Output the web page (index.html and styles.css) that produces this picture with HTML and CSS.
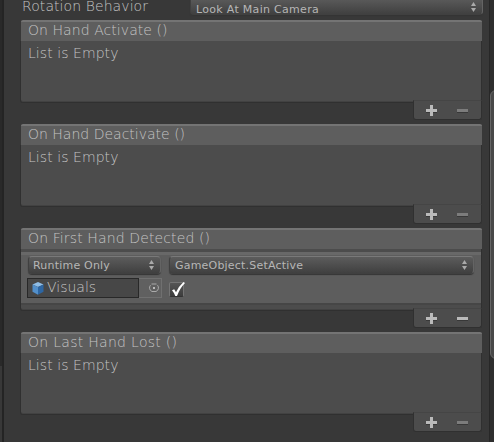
FILE: index.html
```html
<!DOCTYPE html>
<html lang="en">
<head>
<meta charset="utf-8">
<title>Inspector</title>
<link rel="stylesheet" href="styles.css">
</head>
<body>
<div class="gutter"></div>
<main class="inspector">
  <div class="property">
    <span class="label">Rotation Behavior</span>
    <div class="popup camera"><span>Look At Main Camera</span><svg class="arrows" viewBox="0 0 5 10"><path d="M2.5 0 5 4H0zM0 6h5L2.5 10z"/></svg></div>
  </div>
  <section class="event">
    <h2><span class="t-act">On Hand Activate ()</span></h2>
    <div class="list"><span class="empty">List is Empty</span></div>
    <div class="footer"><i class="plus"></i><i class="minus off"></i></div>
  </section>
  <section class="event">
    <h2><span class="t-deact">On Hand Deactivate ()</span></h2>
    <div class="list"><span class="empty">List is Empty</span></div>
    <div class="footer"><i class="plus"></i><i class="minus off"></i></div>
  </section>
  <section class="event">
    <h2><span class="t-first">On First Hand Detected ()</span></h2>
    <div class="list filled">
      <div class="entry">
        <div class="popup runtime"><span>Runtime Only</span><svg class="arrows" viewBox="0 0 5 10"><path d="M2.5 0 5 4H0zM0 6h5L2.5 10z"/></svg></div>
        <div class="popup method"><span>GameObject.SetActive</span><svg class="arrows" viewBox="0 0 5 10"><path d="M2.5 0 5 4H0zM0 6h5L2.5 10z"/></svg></div>
        <div class="object">
          <div class="field">
            <svg class="cube" viewBox="0 0 12 13"><path fill="#8fbde6" d="M6 0 11.500 2.400 6 5 .5 2.400z"/><path fill="#528fca" d="M.5 2.400 6 5v7.700L.5 9.700z"/><path fill="#2d66a3" d="M11.500 2.400 6 5v7.700l5.500-3z"/></svg>
            <span>Visuals</span>
          </div>
          <div class="picker"><svg viewBox="0 0 10 10"><path fill="none" stroke="#aaa" d="M2.500 1h5M1.500 2.200A4 4 0 0 0 3 8.500h4a4 4 0 0 0 1.500-6.300"/><path fill="#bbb" d="M4 4h2v2H4z"/></svg></div>
        </div>
        <div class="check"><svg viewBox="0 0 16 16"><path d="M3 8.200 5.200 7.200 7 10.200Q9.500 4.500 14.500 0L16 1Q11 6 8 14H6.300Q5 10.500 3 8.200z"/></svg></div>
      </div>
    </div>
    <div class="footer"><i class="plus"></i><i class="minus"></i></div>
  </section>
  <section class="event">
    <h2><span class="t-last">On Last Hand Lost ()</span></h2>
    <div class="list"><span class="empty">List is Empty</span></div>
    <div class="footer"><i class="plus"></i><i class="minus off"></i></div>
  </section>
</main>
<div class="scrollbar"><div class="thumb"></div></div>
</body>
</html>
```
FILE: styles.css
```css
* { box-sizing: border-box; }
body {
  margin: 0;
  width: 494px;
  height: 442px;
  overflow: hidden;
  display: flex;
  background: #383838;
  color: #c4c4c4;
  font: 200 14px/16px "DejaVu Sans", sans-serif;
  white-space: nowrap;
}
.gutter {
  width: 4px;
  background: linear-gradient(#292929, #292929) 0 0 / 2px 366px no-repeat #383838;
  border-right: 2px solid #242424;
}
.inspector { width: 485px; padding-left: 17px; }
.property { display: flex; height: 20px; }
.label { width: 169px; height: 14px; line-height: 13px; padding-left: 1px; letter-spacing: .08px; }
.popup {
  display: flex;
  justify-content: space-between;
  height: 18px;
  padding: 2px 6px 0 5px;
  border: 1px solid #404040;
  border-top-color: #797979;
  border-right-color: #646464;
  border-radius: 4px;
  background: linear-gradient(#5c5c5c, #404040);
  box-shadow: 0 1px 1px #353535;
  font: 11px/14px "DejaVu Sans", sans-serif;
  letter-spacing: .2px;
  color: #b6b6b6;
}
.arrows { width: 5px; height: 10px; margin-top: 1px; fill: #aaa; }
.camera { width: 293px; margin-top: -3px; padding-top: 5px; letter-spacing: .3px; }
.camera .arrows { margin-top: -1px; }
.event { width: 461px; height: 104px; }
h2 {
  height: 21px;
  margin: 0;
  padding: 0 7px;
  border-top: 2px solid #747474;
  border-radius: 2px 2px 0 0;
  background: #5e5e5e;
  font: inherit;
}
.t-act, .empty { letter-spacing: .06px; }
.t-first { letter-spacing: .12px; }
.t-last { letter-spacing: .29px; }
.list {
  height: 62px;
  padding: 4px 7px;
  background: #4c4c4c;
  border: solid #303030;
  border-width: 0 1px 1px 0;
  border-radius: 0 0 3px 3px;
  box-shadow: inset 0 -1px #424242, -1px 0 #303030;
}
.footer {
  position: relative;
  display: flex;
  width: 69px;
  height: 20px;
  margin: -3px 0 0 392px;
  border: 1px solid #303030;
  border-top-color: #454545;
  border-radius: 0 0 3px 3px;
  background: #4c4c4c;
}
.plus, .minus { height: 3px; margin-top: 8px; background: #bababa; box-shadow: 0 1px #383838; }
.plus { position: relative; width: 11px; margin-left: 12px; }
.plus::before { content: ""; position: absolute; left: 4px; top: -4px; width: 3px; height: 11px; background: #bababa; }
.minus { width: 11px; margin-left: 20px; }
.off { background: #7c7c7c; }
.filled { padding: 3px 0 5px; }
.filled .entry {
  display: grid;
  grid-template-columns: 141px 305px;
  grid-template-rows: 22px 21px;
  height: 53px;
  padding: 1px 6px;
  background: #5d5d5d;
  border-top: 3px solid #686868;
  border-bottom: 2px solid #464646;
}
.runtime { width: 133px; margin-left: 1px; padding-left: 4px; }
.method { width: 305px; margin-left: 1px; }
.object { display: flex; height: 20px; }
.field {
  display: flex;
  width: 112px;
  padding: 0 4px;
  border: 1px solid #282828;
  background: #474747;
}
.cube { width: 12px; height: 13px; margin: 3px 3px 0 0; }
.picker { width: 23px; padding: 4px 8px; border: 1px solid #707070; border-left: 0; background: #606060; }
.picker svg { display: block; width: 10px; height: 10px; margin-left: 2px; }
.check {
  width: 15px;
  height: 15px;
  margin: 4px 0 0 1px;
  border: 1px solid #757575;
  border-bottom-color: #333;
  border-radius: 2px;
  background: linear-gradient(#555, #3d3d3d);
}
.check svg { display: block; width: 16px; height: 16px; margin: -1px 0 0 -1px; fill: #fff; }
.scrollbar {
  width: 5px;
  height: 442px;
  padding-top: 90px;
  border-left: 1px solid #272727;
  background: #2e2e2e;
}
.thumb { width: 14px; height: 269px; border: 1px solid #666; border-radius: 6px; background: #484848; }
```
